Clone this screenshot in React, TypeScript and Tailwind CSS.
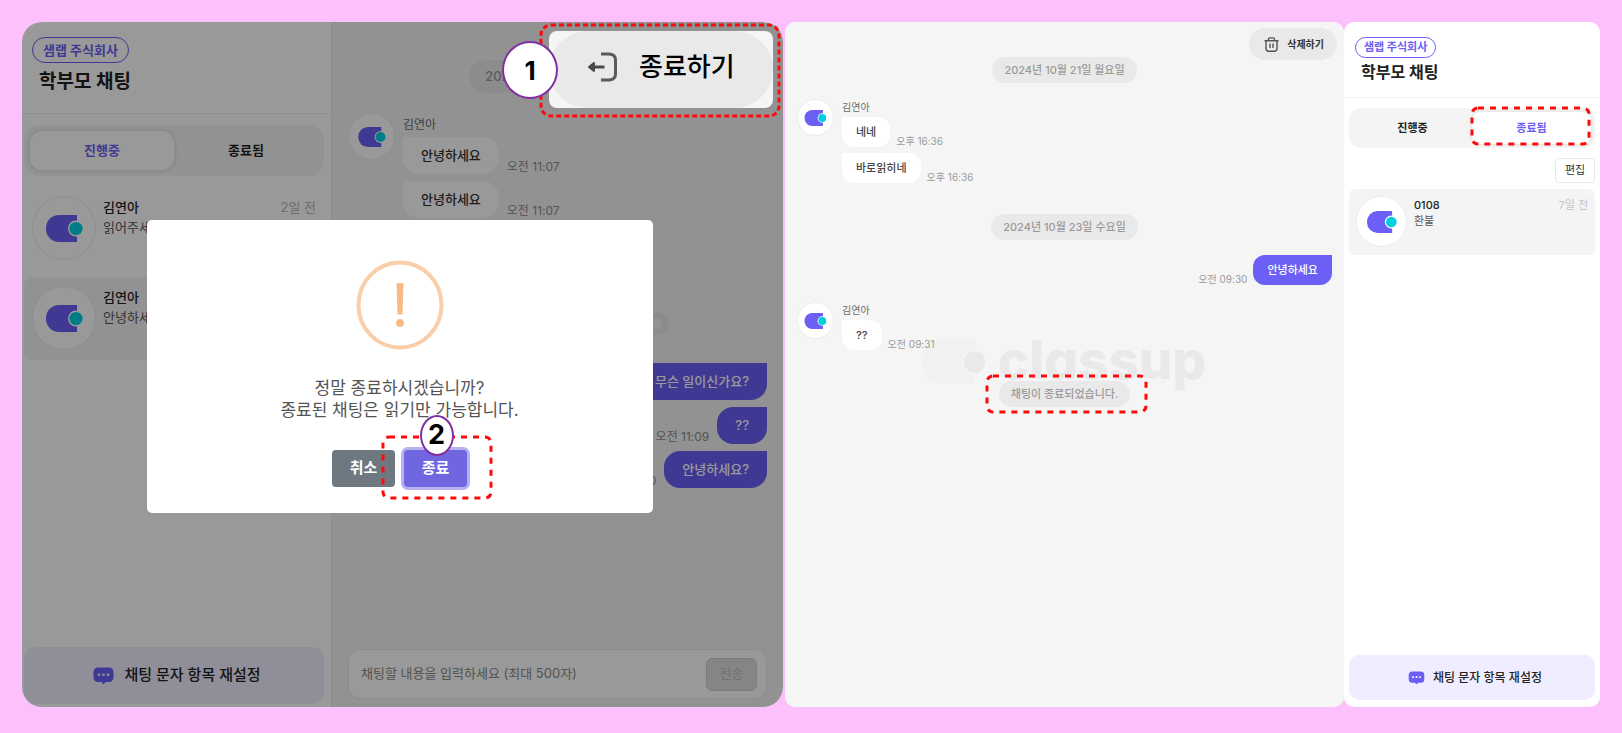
import type { ReactNode } from "react";

const FONT = "font-['Inter','Noto_Sans_CJK_KR',sans-serif]";

function ClassupMark({ className }: { className: string }) {
  return (
    <svg viewBox="0 0 37 27" className={className} aria-hidden="true">
      <path d="M13 0H31V27H13A13 13 0 0 1 0 14V13A13 13 0 0 1 13 0Z" fill="#6b5ff5" />
      <circle cx="30" cy="13.500" r="8" fill="#fff" />
      <circle cx="30" cy="13.500" r="6.600" fill="#00cfe2" />
    </svg>
  );
}

function Avatar({ frame, mark }: { frame: string; mark: string }) {
  return (
    <span className={`flex shrink-0 items-center justify-center rounded-full border border-[#ececec] bg-white ${frame}`}>
      <ClassupMark className={mark} />
    </span>
  );
}

function Watermark({ frame, mark, text }: { frame: string; mark: string; text: string }) {
  return (
    <div aria-hidden="true" className={`pointer-events-none absolute flex items-center justify-center ${frame}`}>
      <svg viewBox="0 0 63 45" className={mark}>
        <path d="M18 0H52V45H18A18 18 0 0 1 0 27V18A18 18 0 0 1 18 0Z" fill="#f1f1f1" />
        <circle cx="51.500" cy="23" r="12.500" fill="#f5f5f5" />
        <circle cx="51.500" cy="23" r="10.800" fill="#e9e9e9" />
      </svg>
      <span className={`font-extrabold text-[#e9e9e9] [font-feature-settings:'cv11'] ${text}`}>classup</span>
    </div>
  );
}

function DashedFrame({ frame, radius, dash }: { frame: string; radius: number; dash: string }) {
  return (
    <svg aria-hidden="true" className={`pointer-events-none absolute overflow-visible ${frame}`}>
      <rect width="100%" height="100%" rx={radius} fill="none" stroke="#ff0a0a" strokeWidth="3" strokeDasharray={dash} />
    </svg>
  );
}

function ChatBubbleIcon({ className }: { className: string }) {
  return (
    <svg viewBox="0 0 21 18" className={className} aria-hidden="true">
      <path d="M5 0.500H16A4.500 4.500 0 0 1 20.500 5V10.500A4.500 4.500 0 0 1 16 15H12.500L10.500 17.500L8.500 15H5A4.500 4.500 0 0 1 .5 10.500V5A4.500 4.500 0 0 1 5 .5Z" fill="#6b5ff5" />
      <g fill="#efedff">
        <rect x="4.800" y="6.500" width="2.400" height="2.600" rx=".6" />
        <rect x="9.300" y="6.500" width="2.400" height="2.600" rx=".6" />
        <rect x="13.800" y="6.500" width="2.400" height="2.600" rx=".6" />
      </g>
    </svg>
  );
}

function ExitIcon({ className }: { className: string }) {
  return (
    <svg viewBox="0 0 30 30" className={className} fill="none" stroke="#5a5a5a" strokeWidth="3" aria-hidden="true">
      <path d="M14 2H22.500Q28.500 2.500 28.500 8V22Q28.500 27.500 22.500 28H14" />
      <path d="M17.500 15H4" stroke="#4a4a4a" />
      <path d="M7 11L2 15L7 19Z" fill="#4a4a4a" stroke="#4a4a4a" strokeWidth="2" strokeLinejoin="round" />
    </svg>
  );
}

function TrashIcon({ className }: { className: string }) {
  return (
    <svg viewBox="0 0 15 15" className={className} fill="none" stroke="#555" strokeWidth="1.400" aria-hidden="true">
      <path d="M.5 3.700H14.500M4.500 3.500V2.500Q4.500 .9 6 .9H9Q10.500 .9 10.500 2.500V3.500M2 3.700V11.500Q2 14.200 4.700 14.200H10.300Q13 14.200 13 11.500V3.700M6 6.500V11M9 6.500V11" />
    </svg>
  );
}

function DateChip({ className, children }: { className: string; children: ReactNode }) {
  return (
    <div className={`relative self-center rounded-full bg-[#e9e9e9] text-center font-medium whitespace-nowrap text-[#9a9a9a] ${className}`}>
      {children}
    </div>
  );
}

function LargeMessage({ text, time, mine = false }: { text: string; time?: string; mine?: boolean }) {
  return (
    <div className={mine ? "flex flex-row-reverse items-end gap-2" : "flex items-end gap-2"}>
      <p
        className={
          mine
            ? "h-[37px] rounded-2xl rounded-tr-none bg-[#6b5ff5] px-[18px] text-[13px] leading-[37px] font-medium whitespace-nowrap text-white"
            : "h-[37px] rounded-2xl rounded-tl-none bg-white px-[18px] text-[13px] leading-[37px] font-medium whitespace-nowrap text-[#333]"
        }
      >
        {text}
      </p>
      {time && <time className="text-[12px] leading-3.5 whitespace-nowrap text-[#8c8c8c]">{time}</time>}
    </div>
  );
}

function SmallMessage({ text, time, mine = false }: { text: string; time: string; mine?: boolean }) {
  return (
    <div className={mine ? "flex flex-row-reverse items-end gap-1.5" : "flex items-end gap-1.5"}>
      <p
        className={
          mine
            ? "h-[30px] rounded-xl rounded-tr-none bg-[#6b5ff5] px-3.5 text-[11px] leading-[30px] font-medium whitespace-nowrap text-white"
            : "h-[30px] rounded-xl rounded-tl-none bg-white px-3.5 text-[11px] leading-[30px] font-medium whitespace-nowrap text-[#444]"
        }
      >
        {text}
      </p>
      <time className="text-[10px] leading-3 whitespace-nowrap text-[#9a9a9a]">{time}</time>
    </div>
  );
}

function LargeRoom({ name, preview, when, selected = false }: { name: string; preview: string; when?: string; selected?: boolean }) {
  return (
    <li className={selected ? "flex h-[82px] gap-[7px] rounded-lg bg-[#f4f4f4] p-2" : "flex h-[82px] gap-[7px] rounded-lg p-2"}>
      <Avatar frame="size-16" mark="h-[27px] w-[37px]" />
      <div className="flex-1 pt-px text-[13px] leading-5">
        <div className="flex justify-between">
          <strong className="font-medium text-[#222]">{name}</strong>
          {when && <time className="text-[#b4b4b4]">{when}</time>}
        </div>
        <p className="text-[#555]">{preview}</p>
      </div>
    </li>
  );
}

function ActivePanel() {
  return (
    <section className="relative flex min-w-0 flex-[761] rounded-[20px] bg-white">
      <aside className="flex w-[310px] shrink-0 flex-col border-r border-[#e9e9e9]">
        <header className="flex h-[92px] flex-col items-start border-b border-[#ececec] pt-[15px] pl-2.5">
          <span className="h-[26px] rounded-full border border-[#6b5ff5] px-2.5 text-[13px] leading-6 font-bold text-[#6b5ff5]">샘랩 주식회사</span>
          <h1 className="mt-1 pl-[7px] text-[19px] leading-[30px] font-bold text-[#222]">학부모 채팅</h1>
        </header>
        <div className="mt-[11px] mr-[7px] ml-0.5 flex h-[51px] rounded-2xl bg-[#f4f4f4] p-1.5 text-[13px] font-bold">
          <button type="button" className="flex-1 rounded-xl bg-white text-[#6b5ff5] shadow-[0_0_5px_rgba(0,0,0,0.15)]">진행중</button>
          <button type="button" className="flex-1 text-[#222]">종료됨</button>
        </div>
        <ul className="mt-3 mr-[7px] ml-0.5 flex flex-col gap-2">
          <LargeRoom name="김연아" preview="읽어주세요" when="2일 전" />
          <LargeRoom name="김연아" preview="안녕하세요" selected />
        </ul>
        <button type="button" className="mt-auto mr-[7px] mb-[3px] ml-0.5 flex h-[57px] items-center justify-center gap-2.5 rounded-xl bg-[#efedff] pl-1.5 text-[15px] font-medium text-[#222]">
          <ChatBubbleIcon className="h-[18px] w-[21px]" />
          채팅 문자 항목 재설정
        </button>
      </aside>

      <div className="relative flex min-w-0 flex-1 flex-col rounded-r-[20px] bg-[#f4f4f4] px-4">
        <Watermark frame="inset-x-0 top-[273px] gap-2.5" mark="h-9 w-[50px]" text="text-[42px] leading-[50px]" />
        <DateChip className="mt-[38px] h-[33px] px-4 text-[13px] leading-[33px]">2024년 10월 22일 화요일</DateChip>
        <div className="mt-5 flex gap-2">
          <Avatar frame="size-[47px]" mark="h-5 w-7" />
          <div className="flex flex-col gap-[7px]">
            <p className="-mb-[7px] h-6 text-[12px] leading-6 text-[#6d6d6d]">김연아</p>
            <LargeMessage text="안녕하세요" time="오전 11:07" />
            <LargeMessage text="안녕하세요" time="오전 11:07" />
          </div>
        </div>
        <div className="relative mt-[145px] flex flex-col gap-[7px]">
          <LargeMessage mine text="무슨 일이신가요?" />
          <LargeMessage mine text="??" time="오전 11:09" />
          <LargeMessage mine text="안녕하세요?" time="오전 11:10" />
        </div>
        <form className="mt-auto mb-2 flex h-[50px] items-center rounded-xl border border-[#e9e9e9] bg-white pr-[9px] pl-3">
          <input
            aria-label="채팅 내용"
            placeholder="채팅할 내용을 입력하세요 (최대 500자)"
            className="min-w-0 flex-1 bg-transparent text-[13px] outline-none placeholder:text-[#8a8a8a]"
          />
          <button type="button" disabled className="h-[33px] w-[51px] rounded-md border border-[#cfcfcf] bg-[#dedede] text-[13px] text-[#bdbdbd]">전송</button>
        </form>
      </div>

      <div className="absolute inset-0 flex items-center justify-center rounded-[20px] bg-black/40 pt-[3px] pr-1.5">
        <div role="dialog" aria-label="채팅 종료" className="relative flex h-[293px] w-[506px] flex-col items-center rounded-[5px] bg-white pt-10">
          <svg viewBox="0 0 88 90" className="h-[90px] w-[88px]" aria-hidden="true">
            <ellipse cx="44" cy="45" rx="41.500" ry="42.500" fill="none" stroke="#facea8" strokeWidth="4" />
            <path d="M40.500 23H47.500L46.500 54.500H41.500Z" fill="#f8bb86" />
            <circle cx="44" cy="63" r="4" fill="#f8bb86" />
          </svg>
          <p className="mt-[27px] text-center text-[17px] leading-[22px] text-[#545454]">
            정말 종료하시겠습니까?
            <br />
            종료된 채팅은 읽기만 가능합니다.
          </p>
          <div className="mt-[29px] flex gap-[9px] text-[15px] font-bold text-white">
            <button type="button" className="h-[37px] w-[63px] rounded bg-[#6e7881]">취소</button>
            <button type="button" className="h-[37px] w-[63px] rounded bg-[#7066e0] ring-3 ring-[#b7b2ef]">종료</button>
          </div>
          <DashedFrame frame="top-[217px] left-[236px] h-[61px] w-[108px]" radius={6} dash="6 6" />
          <span className="absolute top-[195px] left-[273px] flex h-[41px] w-[34px] items-center justify-center rounded-[50%] border-2 border-[#8030a0] bg-white text-[27px] font-bold text-black">2</span>
        </div>
      </div>

      <div className="absolute top-[9px] right-2.5 h-[77px] w-56 overflow-hidden rounded-lg bg-[#f5f5f5]">
        <button type="button" className="flex h-[77px] w-full items-center gap-[22px] rounded-full bg-[#e9e9e9] pb-1.5 pl-[38px] text-[26px] font-medium text-black">
          <ExitIcon className="size-[30px]" />
          종료하기
        </button>
      </div>
      <DashedFrame frame="top-[3px] right-1 h-[91px] w-[238px]" radius={10} dash="5 3" />
      <span className="absolute top-[19px] right-[225px] flex h-[58px] w-14 items-center justify-center rounded-[50%] border-2 border-[#8030a0] bg-white text-[26px] font-bold text-black">1</span>
    </section>
  );
}

function EndedChatPanel() {
  return (
    <section className="relative flex min-w-0 flex-[535] flex-col rounded-[10px] bg-[#f5f5f5] px-3">
      <Watermark frame="inset-x-0 top-[308px] gap-3" mark="h-[45px] w-[63px]" text="pb-0.5 text-[53px] leading-[60px]" />
      <button type="button" className="absolute top-1.5 right-[7px] flex h-8 items-center gap-2 rounded-full bg-[#e9e9e9] pr-[13px] pl-[15px] text-[10px] font-bold text-[#333]">
        <TrashIcon className="size-[15px]" />
        삭제하기
      </button>
      <DateChip className="mt-[35px] h-[26px] px-3 text-[11px] leading-[26px]">2024년 10월 21일 월요일</DateChip>
      <div className="mt-4 flex gap-2">
        <Avatar frame="size-[37px]" mark="h-4 w-[23px]" />
        <div className="flex flex-col gap-1.5">
          <p className="-mb-1.5 h-[18px] text-[10px] leading-[17px] text-[#6d6d6d]">김연아</p>
          <SmallMessage text="네네" time="오후 16:36" />
          <SmallMessage text="바로읽히네" time="오후 16:36" />
        </div>
      </div>
      <DateChip className="mt-[31px] h-[26px] px-3 text-[11px] leading-[26px]">2024년 10월 23일 수요일</DateChip>
      <div className="mt-[15px]">
        <SmallMessage mine text="안녕하세요" time="오전 09:30" />
      </div>
      <div className="relative mt-[17px] flex gap-2">
        <Avatar frame="size-[37px]" mark="h-4 w-[23px]" />
        <div className="flex flex-col">
          <p className="h-[18px] text-[10px] leading-[17px] text-[#6d6d6d]">김연아</p>
          <SmallMessage text="??" time="오전 09:31" />
        </div>
      </div>
      <DateChip className="mt-[31px] h-[26px] px-3 text-[11px] leading-[26px]">
        채팅이 종료되었습니다.
        <DashedFrame frame="-top-[5px] -left-3 h-9 w-[159px]" radius={6} dash="6 6" />
      </DateChip>
    </section>
  );
}

function EndedListPanel() {
  return (
    <aside className="flex min-w-0 flex-[256] flex-col rounded-[10px] bg-white">
      <header className="flex h-[76px] flex-col items-start border-b border-[#f0f0f0] pt-[15px] pl-[11px]">
        <span className="h-[21px] rounded-full border border-[#6b5ff5] px-2 text-[11px] leading-[19px] font-bold text-[#6b5ff5]">샘랩 주식회사</span>
        <h2 className="mt-0.5 pl-1.5 text-[16px] leading-6 font-bold text-[#222]">학부모 채팅</h2>
      </header>
      <div className="mx-[5px] mt-2.5 flex h-10 rounded-xl bg-[#f4f4f4] p-1 text-[11px] font-bold">
        <button type="button" className="flex-1 text-[#222]">진행중</button>
        <button type="button" className="relative flex-1 rounded-lg bg-white text-[#6b5ff5] shadow-[0_0_4px_rgba(0,0,0,0.12)]">
          종료됨
          <DashedFrame frame="-top-1 left-0 h-9 w-[117px]" radius={6} dash="6 6" />
        </button>
      </div>
      <button type="button" className="mt-2.5 mr-[5px] h-[25px] w-10 self-end rounded-[3px] border border-[#e9e9e9] bg-white text-[11px] text-[#333]">편집</button>
      <div className="mx-[5px] mt-1.5 flex h-[66px] gap-[7px] rounded-md bg-[#f4f4f4] p-[7px]">
        <Avatar frame="size-[51px]" mark="h-[22px] w-[30px]" />
        <div className="flex-1 pt-px text-[11px] leading-4">
          <div className="flex justify-between">
            <strong className="font-medium text-[#222]">0108</strong>
            <time className="text-[#c4c4c4]">7일 전</time>
          </div>
          <p className="text-[#555]">환불</p>
        </div>
      </div>
      <button type="button" className="mx-[5px] mt-auto mb-[7px] flex h-[45px] items-center justify-center gap-2 rounded-[10px] bg-[#efedff] pl-1.5 text-[12px] font-medium text-[#222]">
        <ChatBubbleIcon className="h-3.5 w-[17px]" />
        채팅 문자 항목 재설정
      </button>
    </aside>
  );
}

export default function App() {
  return (
    <main lang="ko" className={`flex min-h-screen bg-[#fcc1fd] px-[22px] pt-[22px] pb-[26px] ${FONT}`}>
      <ActivePanel />
      <div className="ml-0.5 flex min-w-0 flex-[815]">
        <EndedChatPanel />
        <EndedListPanel />
      </div>
    </main>
  );
}
